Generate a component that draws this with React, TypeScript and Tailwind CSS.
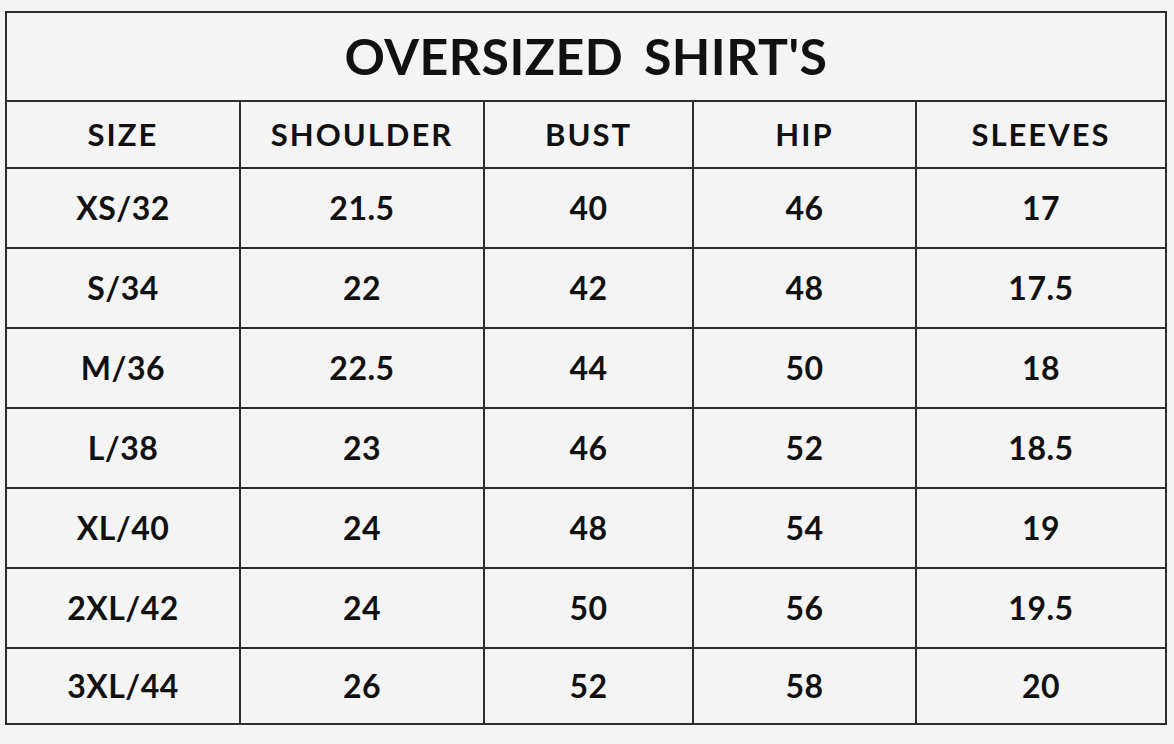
const headers = ["SIZE", "SHOULDER", "BUST", "HIP", "SLEEVES"];

const rows = [
  ["XS/32", "21.5", "40", "46", "17"],
  ["S/34", "22", "42", "48", "17.5"],
  ["M/36", "22.5", "44", "50", "18"],
  ["L/38", "23", "46", "52", "18.5"],
  ["XL/40", "24", "48", "54", "19"],
  ["2XL/42", "24", "50", "56", "19.5"],
  ["3XL/44", "26", "52", "58", "20"],
];

const App = () => {
  return (
    <div
      className="w-[1174px] h-[744px] bg-[#f4f4f4] pl-[5px] pt-[11px] overflow-hidden text-[#111]"
      style={{ fontFamily: "Lato, 'Open Sans', sans-serif" }}
    >
      <table className="border-collapse table-fixed w-[1160px]">
        <colgroup>
          <col className="w-[234px]" />
          <col className="w-[244px]" />
          <col className="w-[209px]" />
          <col className="w-[223px]" />
          <col className="w-[250px]" />
        </colgroup>
        <thead>
          <tr className="h-[89px]">
            <th
              colSpan={5}
              className="border-2 border-[#2e2e2e] text-[50px] font-bold tracking-[0.5px] [word-spacing:8px] text-center"
            >
              OVERSIZED SHIRT'S
            </th>
          </tr>
          <tr className="h-[67px]">
            {headers.map((h) => (
              <th
                key={h}
                className="border-2 border-[#2e2e2e] text-[31px] font-bold tracking-[2px] text-center"
              >
                {h}
              </th>
            ))}
          </tr>
        </thead>
        <tbody>
          {rows.map((r, i) => (
            <tr key={r[0]} className={i === rows.length - 1 ? "h-[76px]" : "h-[80px]"}>
              {r.map((c, j) => (
                <td
                  key={j}
                  className="border-2 border-[#2e2e2e] text-[32px] font-bold tracking-[0.5px] text-center"
                >
                  {c}
                </td>
              ))}
            </tr>
          ))}
        </tbody>
      </table>
    </div>
  );
};

export default App;
